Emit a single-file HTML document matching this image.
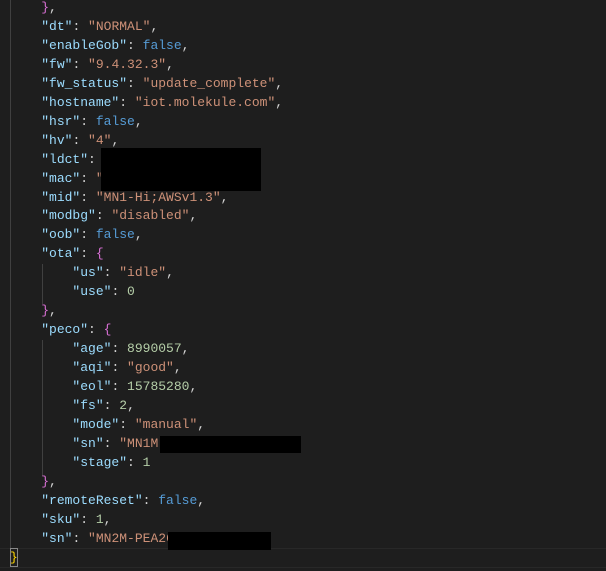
<!DOCTYPE html>
<html><head><style>
html,body{margin:0;padding:0;background:#1e1e1e;width:606px;height:571px;overflow:hidden}
#c{position:absolute;left:10px;top:-1px;font-family:"Liberation Mono",monospace;font-size:13px;line-height:18.96px;color:#d4d4d4;white-space:pre}
.k{color:#9cdcfe}.s{color:#ce9178}.b{color:#569cd6}.n{color:#b5cea8}.p{color:#da70d6}.y{color:#ffd700}
.g{position:absolute;width:1px;background:#404040}
.r{position:absolute;background:#000}
</style></head><body>
<div class="g" style="left:10px;top:0;height:548px"></div>
<div class="g" style="left:42px;top:264px;height:40px"></div>
<div class="g" style="left:42px;top:340px;height:136px"></div>
<div style="position:absolute;left:0;top:548px;width:606px;height:20px;border-top:1px solid #282828;border-bottom:1px solid #282828;box-sizing:border-box"></div>
<div style="position:absolute;left:10px;top:548px;width:8px;height:19px;border:1px solid #888;box-sizing:border-box"></div>
<div id="c">    <span class="p">}</span>,
    <span class="k">"dt"</span>: <span class="s">"NORMAL"</span>,
    <span class="k">"enableGob"</span>: <span class="b">false</span>,
    <span class="k">"fw"</span>: <span class="s">"9.4.32.3"</span>,
    <span class="k">"fw_status"</span>: <span class="s">"update_complete"</span>,
    <span class="k">"hostname"</span>: <span class="s">"iot.molekule.com"</span>,
    <span class="k">"hsr"</span>: <span class="b">false</span>,
    <span class="k">"hv"</span>: <span class="s">"4"</span>,
    <span class="k">"ldct"</span>: 
    <span class="k">"mac"</span>: <span class="s">"</span>
    <span class="k">"mid"</span>: <span class="s">"MN1-Hi;AWSv1.3"</span>,
    <span class="k">"modbg"</span>: <span class="s">"disabled"</span>,
    <span class="k">"oob"</span>: <span class="b">false</span>,
    <span class="k">"ota"</span>: <span class="p">{</span>
        <span class="k">"us"</span>: <span class="s">"idle"</span>,
        <span class="k">"use"</span>: <span class="n">0</span>
    <span class="p">}</span>,
    <span class="k">"peco"</span>: <span class="p">{</span>
        <span class="k">"age"</span>: <span class="n">8990057</span>,
        <span class="k">"aqi"</span>: <span class="s">"good"</span>,
        <span class="k">"eol"</span>: <span class="n">15785280</span>,
        <span class="k">"fs"</span>: <span class="n">2</span>,
        <span class="k">"mode"</span>: <span class="s">"manual"</span>,
        <span class="k">"sn"</span>: <span class="s">"MN1M</span>
        <span class="k">"stage"</span>: <span class="n">1</span>
    <span class="p">}</span>,
    <span class="k">"remoteReset"</span>: <span class="b">false</span>,
    <span class="k">"sku"</span>: <span class="n">1</span>,
    <span class="k">"sn"</span>: <span class="s">"MN2M-PEA26</span>
<span class="y">}</span></div>
<div class="r" style="left:101px;top:148px;width:160px;height:43px"></div>
<div class="r" style="left:160px;top:436px;width:141px;height:17px"></div>
<div class="r" style="left:168px;top:532px;width:103px;height:18px"></div>
</body></html>
